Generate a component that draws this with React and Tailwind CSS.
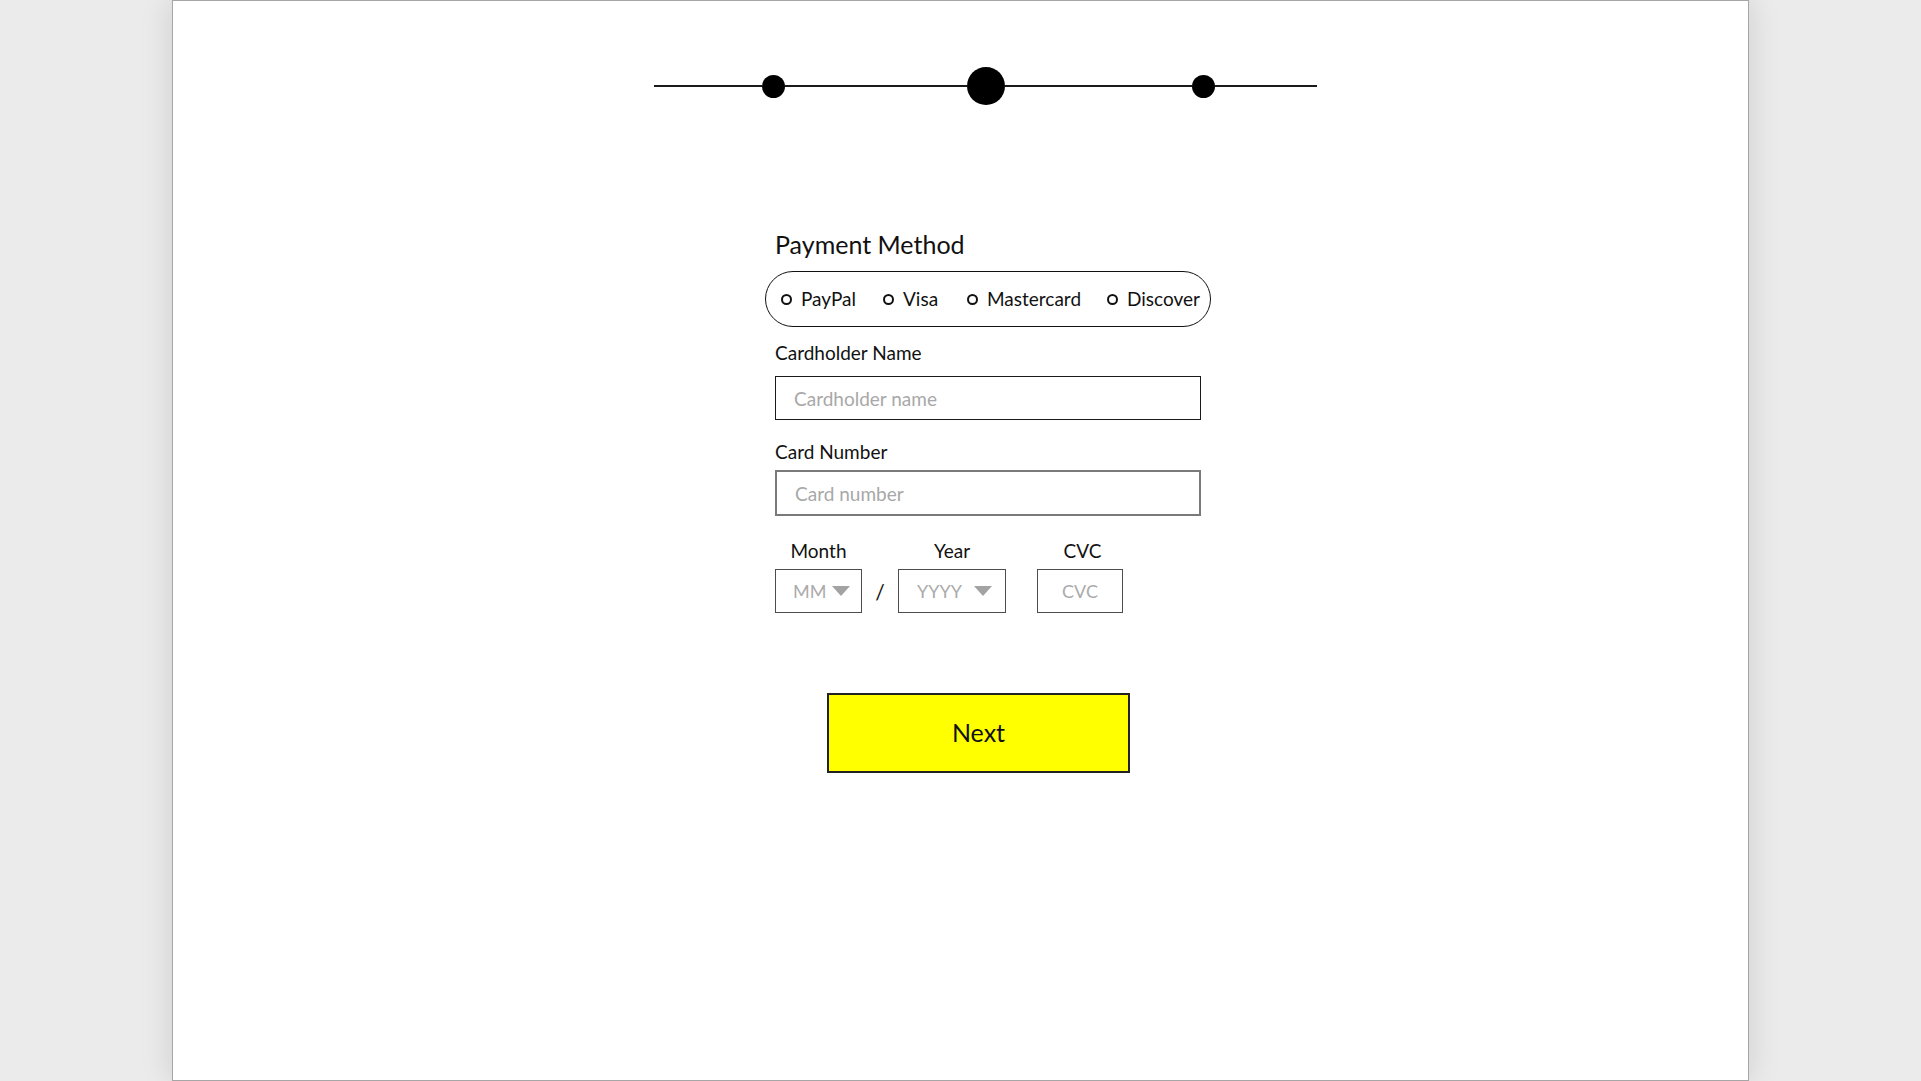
import React from "react";

function Dot({ size }) {
  return <div className={`${size} shrink-0 rounded-full bg-black`} />;
}

function Line({ width }) {
  return <div className={`${width} h-[2px] shrink-0 bg-[#1a1a1a]`} />;
}

function Radio({ label, width }) {
  return (
    <label className={`${width} flex items-center gap-[9px] cursor-pointer`}>
      <span className="w-[11px] h-[11px] shrink-0 rounded-full border-2 border-[#111]" />
      <span className="text-[19px] leading-[22px] text-[#111]">{label}</span>
    </label>
  );
}

function Caret() {
  return (
    <svg width="18" height="11" viewBox="0 0 18 11" className="shrink-0">
      <polygon points="0,0 18,0 9,10" fill="#a3a3a3" />
    </svg>
  );
}

export default function App() {
  return (
    <div className="w-full h-[1081px] bg-[#ebebeb] overflow-hidden font-['Lato','Liberation_Sans',sans-serif]">
      <div className="mx-auto w-[1577px] h-[1081px] bg-white border border-[#a6a6a6] shadow-[0_0_30px_rgba(0,0,0,0.13)]">
        {/* Progress steps */}
        <div className="mt-[66px] ml-[481px] h-[38px] flex items-center">
          <Line width="w-[108px]" />
          <Dot size="w-[23px] h-[23px]" />
          <Line width="w-[182px]" />
          <Dot size="w-[38px] h-[38px]" />
          <Line width="w-[187px]" />
          <Dot size="w-[23px] h-[23px]" />
          <Line width="w-[102px]" />
        </div>

        <div className="ml-[592px] flex flex-col items-start">
          <h2 className="mt-[124px] ml-[10px] text-[25px] leading-[30px] text-[#111]">
            Payment Method
          </h2>

          <div className="mt-[12px] w-[446px] h-[56px] rounded-full border-[1.5px] border-[#111] flex items-center pl-[15px]">
            <Radio label="PayPal" width="w-[102px]" />
            <Radio label="Visa" width="w-[84px]" />
            <Radio label="Mastercard" width="w-[140px]" />
            <Radio label="Discover" width="" />
          </div>

          <label className="mt-[15px] ml-[10px] text-[19px] leading-[22px] text-[#111]">
            Cardholder Name
          </label>
          <input
            type="text"
            placeholder="Cardholder name"
            className="mt-[12px] ml-[10px] w-[426px] h-[44px] border-[1.5px] border-[#1a1a1a] pl-[18px] text-[19px] outline-none placeholder:text-[#a8a8a8]"
          />

          <label className="mt-[21px] ml-[10px] text-[19px] leading-[22px] text-[#111]">
            Card Number
          </label>
          <input
            type="text"
            placeholder="Card number"
            className="mt-[7px] ml-[10px] w-[426px] h-[46px] border-2 border-[#7a7a7a] pl-[18px] text-[19px] outline-none placeholder:text-[#a8a8a8]"
          />

          {/* Expiry + CVC */}
          <div className="mt-[24px] ml-[10px] flex items-start">
            <div className="w-[87px] flex flex-col">
              <span className="text-center text-[19px] leading-[22px] text-[#111]">Month</span>
              <div className="mt-[7px] h-[44px] border-[1.5px] border-[#4d4d4d] flex items-center pl-[17px] gap-[6px]">
                <span className="text-[18px] leading-[22px] text-[#ababab]">MM</span>
                <Caret />
              </div>
            </div>
            <div className="w-[36px] h-[73px] pt-[31px] flex items-center justify-center">
              <span className="text-[21px] leading-[22px] text-[#111]">/</span>
            </div>
            <div className="w-[108px] flex flex-col">
              <span className="text-center text-[19px] leading-[22px] text-[#111]">Year</span>
              <div className="mt-[7px] h-[44px] border-[1.5px] border-[#4d4d4d] flex items-center pl-[18px] gap-[12px]">
                <span className="text-[18px] leading-[22px] text-[#ababab]">YYYY</span>
                <Caret />
              </div>
            </div>
            <div className="ml-[31px] w-[86px] flex flex-col">
              <span className="text-center text-[19px] leading-[22px] text-[#111] pl-[5px]">CVC</span>
              <div className="mt-[7px] h-[44px] border-[1.5px] border-[#4d4d4d] flex items-center justify-center">
                <span className="text-[18px] leading-[22px] text-[#ababab]">CVC</span>
              </div>
            </div>
          </div>

          <button className="mt-[80px] ml-[62px] w-[303px] h-[80px] bg-[#ffff00] border-2 border-[#222] text-[25px] text-[#111]">
            Next
          </button>
        </div>
      </div>
    </div>
  );
}
